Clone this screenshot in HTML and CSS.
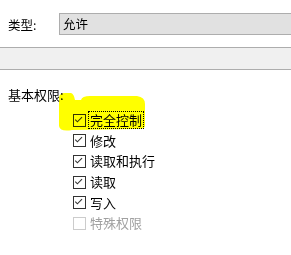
FILE: index.html
```html
<!DOCTYPE html>
<html>
<head>
    <meta charset="UTF-8" />
    <title>权限</title>
    <link rel="stylesheet" href="styles.css">
</head>
<body>
    <div class="type-row">
        <label class="type-label">类型:</label>
        <div class="type-field">允许</div>
    </div>
    <div class="bar"></div>
    <div class="group-label">基本权限:</div>
    <div class="perms">
        <div class="perm">
            <span class="box checked"><svg viewBox="0 0 13 13"><polyline points="2.5,6.5 5,9 10.5,3.5" /></svg></span>
            <span class="name focus">完全控制</span>
        </div>
        <div class="perm">
            <span class="box checked"><svg viewBox="0 0 13 13"><polyline points="2.5,6.5 5,9 10.5,3.5" /></svg></span>
            <span class="name">修改</span>
        </div>
        <div class="perm">
            <span class="box checked"><svg viewBox="0 0 13 13"><polyline points="2.5,6.5 5,9 10.5,3.5" /></svg></span>
            <span class="name">读取和执行</span>
        </div>
        <div class="perm">
            <span class="box checked"><svg viewBox="0 0 13 13"><polyline points="2.5,6.5 5,9 10.5,3.5" /></svg></span>
            <span class="name">读取</span>
        </div>
        <div class="perm">
            <span class="box checked"><svg viewBox="0 0 13 13"><polyline points="2.5,6.5 5,9 10.5,3.5" /></svg></span>
            <span class="name">写入</span>
        </div>
        <div class="perm disabled">
            <span class="box"></span>
            <span class="name">特殊权限</span>
        </div>
    </div>
    <!-- highlighter mark drawn over the first option -->
    <svg class="marker" width="291" height="255" viewBox="0 0 291 255">
        <path d="M59,98 Q59,93 65,93 L71,93 Q74,94 75,100 L81,100 Q82,96 90,96 L137,96 Q145,97 145,104 L145,126 Q145,129 138,129 L72,130 Q60,132 59,126 Z" />
    </svg>
</body>
</html>
```

FILE: styles.css
```css
body {
    margin: 0;
    background: #ffffff;
    font-family: 'Noto Sans CJK SC', 'Noto Sans', sans-serif;
    font-size: 13px;
    color: #000000;
    position: relative;
    min-height: 255px;
}
.type-row {
    display: flex;
    align-items: center;
    padding: 13px 0 0 8px;
}
.type-label {
    width: 51px;
    font-size: 12.5px;
}
.type-field {
    flex: 1;
    height: 22px;
    box-sizing: border-box;
    border: 1px solid #adadad;
    border-right: none;
    background: #e1e1e1;
    padding-left: 3px;
    line-height: 20px;
    font-size: 12.5px;
}
.bar {
    margin-top: 12px;
    height: 23px;
    box-sizing: border-box;
    border-top: 1px solid #adadad;
    border-bottom: 1px solid #adadad;
    background: #f0f0f0;
}
.group-label {
    margin-top: 15px;
    padding-left: 8px;
    line-height: 20px;
}
.perms {
    margin-top: 5px;
    padding-left: 73px;
}
.perm {
    display: flex;
    align-items: center;
    height: 20.6px;
}
.box {
    width: 13px;
    height: 13px;
    box-sizing: border-box;
    border: 1px solid #333333;
    display: flex;
    margin-right: 3px;
}
.box svg {
    width: 11px;
    height: 11px;
}
.box polyline {
    fill: none;
    stroke: #333333;
    stroke-width: 1.3;
    transform: translate(-1px, -1px);
}
.name {
    line-height: 16px;
    padding: 0 1px;
}
.focus {
    outline: 1px dotted #000000;
    outline-offset: 0;
}
.disabled .box {
    border-color: #cccccc;
}
.disabled .name {
    color: #a0a0a0;
}
.marker {
    position: absolute;
    top: 0;
    left: 0;
    pointer-events: none;
    mix-blend-mode: multiply;
}
.marker path {
    fill: #ffff00;
}
```
